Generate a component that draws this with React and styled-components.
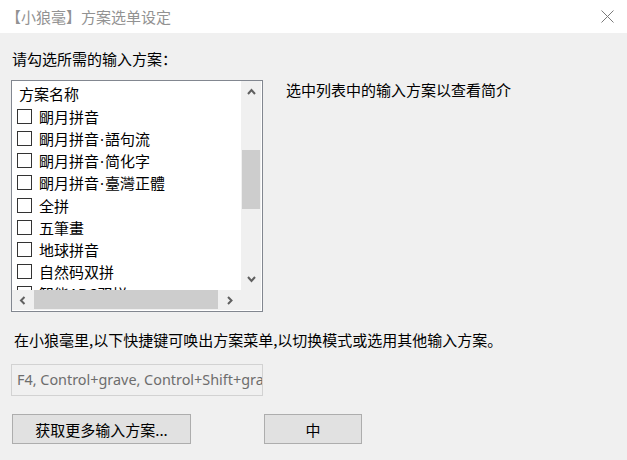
import React from 'react';
import styled, { createGlobalStyle } from 'styled-components';

// 小狼毫 方案选单设定 dialog

const GlobalStyle = createGlobalStyle`
  html, body {
    margin: 0;
    padding: 0;
    background: #f0f0f0;
  }
  body {
    font-family: "Noto Sans CJK SC", "Noto Sans", sans-serif;
  }
`;

const Window = styled.div`
  width: 627px;
  height: 460px;
  background: #f0f0f0;
  overflow: hidden;
  color: #000;
  font-size: 15px;
`;

const TitleBar = styled.div`
  height: 33px;
  background: #fff;
  display: flex;
  align-items: center;
  justify-content: space-between;
  padding: 0 13px 0 6px;
  box-sizing: border-box;
  color: #929292;
  font-size: 15px;
`;

const CloseIcon = () => (
  <svg width="13" height="13" viewBox="0 0 13 13">
    <path d="M0.5 0.5 L12.5 12.5 M12.5 0.5 L0.5 12.5" stroke="#7a7a7a" strokeWidth="1" fill="none" />
  </svg>
);

const Body = styled.div`
  display: flex;
  flex-direction: column;
  padding: 16px 0 0 11px;
`;

const Label = styled.div`
  line-height: 20px;
  padding-left: ${(p) => p.$indent || 1}px;
  margin-top: ${(p) => p.$top || 0}px;
`;

const TopRow = styled.div`
  display: flex;
  gap: 23px;
  margin-top: 11px;
`;

const ListBox = styled.div`
  width: 252px;
  height: 232px;
  box-sizing: border-box;
  border: 1px solid #828790;
  background: #fff;
  display: grid;
  grid-template-columns: 229px 20px;
  grid-template-rows: 209px 20px;
`;

const ListContent = styled.div`
  overflow: hidden;
  padding-top: 2px;
`;

const HeaderRow = styled.div`
  height: 22.2px;
  line-height: 22.2px;
  padding-left: 7px;
`;

const Row = styled.div`
  height: 22.2px;
  display: flex;
  align-items: center;
  padding-left: 5px;
  gap: 7px;
  white-space: nowrap;
`;

const CheckBox = styled.span`
  width: 15px;
  height: 15px;
  box-sizing: border-box;
  border: 1px solid #333;
  background: #fff;
  flex: none;
`;

// narrow middle dot between scheme name parts
const Dot = styled.span`
  font-family: "Noto Sans", sans-serif;
  margin: 0 1px;
`;

const VScroll = styled.div`
  background: #f0f0f0;
  display: flex;
  flex-direction: column;
`;

const HScroll = styled.div`
  background: #f0f0f0;
  display: flex;
  align-items: stretch;
`;

const Corner = styled.div`
  background: #f0f0f0;
`;

const ArrowButton = styled.div`
  flex: none;
  display: flex;
  align-items: center;
  justify-content: center;
  width: ${(p) => p.$w || 20}px;
  height: ${(p) => p.$h || 20}px;
`;

const VThumb = styled.div`
  margin-top: 47px;
  height: 59px;
  margin-left: 1px;
  width: 18px;
  background: #cdcdcd;
`;

const HThumb = styled.div`
  width: 184px;
  margin-left: 1px;
  height: 19px;
  background: #cdcdcd;
`;

const Spacer = styled.div`
  flex: 1;
`;

const Chevron = ({ dir }) => {
  const paths = {
    up: 'M1 6 L4.5 2 L8 6',
    down: 'M1 2 L4.5 6 L8 2',
    left: 'M5.5 1 L2 4.5 L5.5 8',
    right: 'M2 1 L5.5 4.5 L2 8',
  };
  const vertical = dir === 'up' || dir === 'down';
  return (
    <svg width={vertical ? 9 : 8} height={vertical ? 8 : 9} viewBox={vertical ? '0 0 9 8' : '0 0 8 9'}>
      <path d={paths[dir]} stroke="#606060" strokeWidth="2" fill="none" />
    </svg>
  );
};

const Hint = styled.div`
  line-height: 20px;
`;

const ShortcutField = styled.div`
  margin-top: 14px;
  width: 252px;
  height: 32px;
  box-sizing: border-box;
  border: 1px solid #d2d2d2;
  background: #f0f0f0;
  color: #6d6d6d;
  font-family: "Noto Sans", "Open Sans", sans-serif;
  font-size: 14.4px;
  line-height: 30px;
  padding-left: 5px;
  white-space: nowrap;
  overflow: hidden;
`;

const ButtonRow = styled.div`
  display: flex;
  gap: 73px;
  margin-top: 18px;
  padding-left: 1px;
`;

const Button = styled.button`
  width: ${(p) => p.$w}px;
  height: 30px;
  box-sizing: border-box;
  border: 1px solid #adadad;
  background: #e1e1e1;
  font-family: "Noto Sans CJK SC", sans-serif;
  font-size: 15px;
  color: #000;
  padding: 0;
`;

const schemas = [
  ['朙月拼音'],
  ['朙月拼音', '語句流'],
  ['朙月拼音', '简化字'],
  ['朙月拼音', '臺灣正體'],
  ['全拼'],
  ['五筆畫'],
  ['地球拼音'],
  ['自然码双拼'],
  ['智能ABC双拼'],
];

const App = () => {
  return (
    <Window>
      <GlobalStyle />
      <TitleBar>
        <span>【小狼毫】方案选单设定</span>
        <CloseIcon />
      </TitleBar>
      <Body>
        <Label>请勾选所需的输入方案：</Label>
        <TopRow>
          <ListBox>
            <ListContent>
              <HeaderRow>方案名称</HeaderRow>
              {schemas.map(([name, variant]) => (
                <Row key={name + (variant || '')}>
                  <CheckBox />
                  <span>
                    {name}
                    {variant && <Dot>·</Dot>}
                    {variant}
                  </span>
                </Row>
              ))}
            </ListContent>
            <VScroll>
              <ArrowButton $h={22}><Chevron dir="up" /></ArrowButton>
              <VThumb />
              <Spacer />
              <ArrowButton $h={22}><Chevron dir="down" /></ArrowButton>
            </VScroll>
            <HScroll>
              <ArrowButton $w={21} $h={20}><Chevron dir="left" /></ArrowButton>
              <HThumb />
              <Spacer />
              <ArrowButton $w={22} $h={20}><Chevron dir="right" /></ArrowButton>
            </HScroll>
            <Corner />
          </ListBox>
          <Hint>选中列表中的输入方案以查看简介</Hint>
        </TopRow>
        <Label $indent={3} $top={18}>在小狼毫里,以下快捷键可唤出方案菜单,以切换模式或选用其他输入方案。</Label>
        <ShortcutField>F4, Control+grave, Control+Shift+grave</ShortcutField>
        <ButtonRow>
          <Button $w={179}>获取更多输入方案...</Button>
          <Button $w={98}>中</Button>
        </ButtonRow>
      </Body>
    </Window>
  );
};

export default App;
